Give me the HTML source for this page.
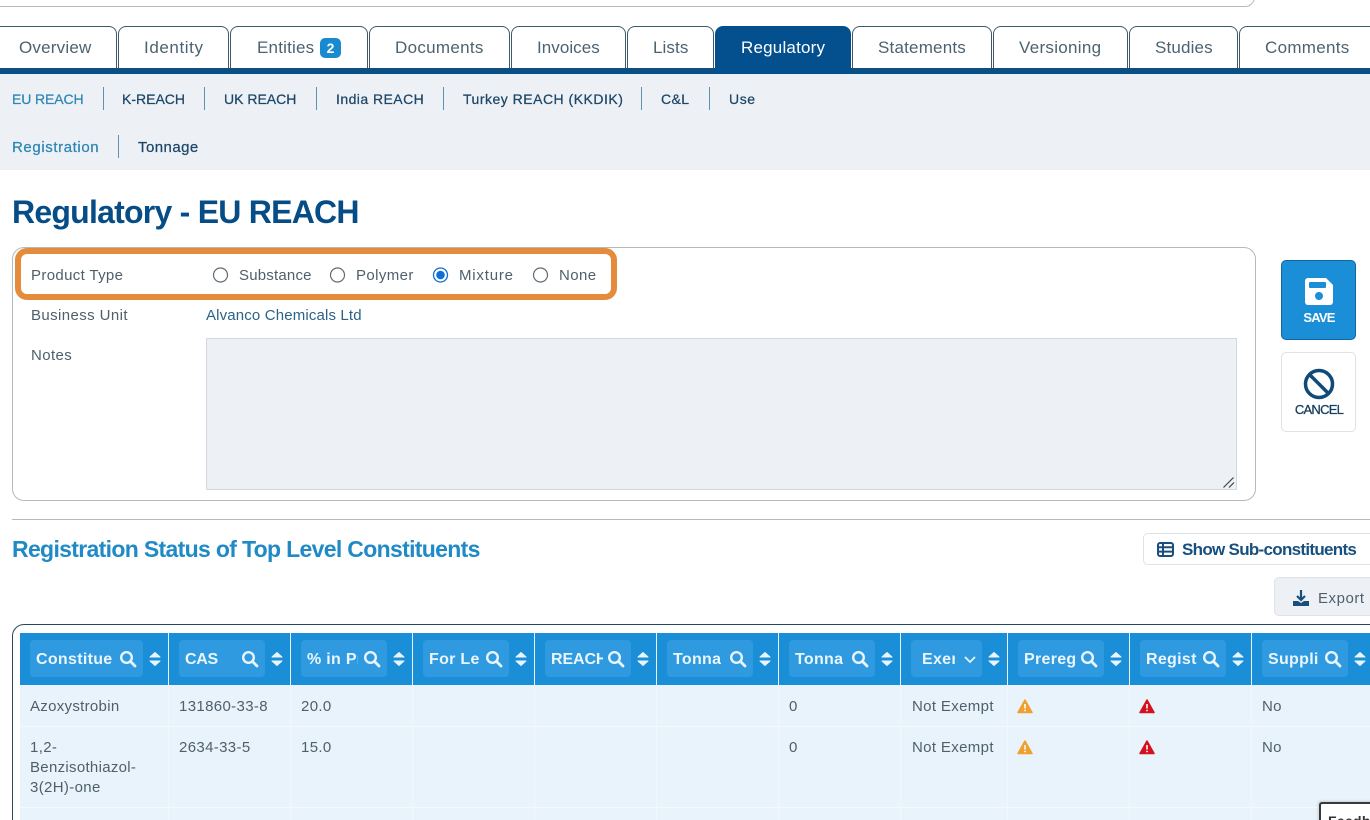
<!DOCTYPE html>
<html style="width:1370px;height:820px;overflow:hidden"><head><meta charset="utf-8"><title>Regulatory - EU REACH</title>
<style>
html,body{margin:0;padding:0}
body{width:1370px;height:820px;overflow:hidden;background:#fff;font-family:"Liberation Sans",sans-serif;color:#4a5a66;font-size:15px}
#p{position:relative;width:1370px;height:820px;overflow:hidden;background:#fff}
.a{position:absolute;box-sizing:border-box}
.t{position:absolute;white-space:nowrap;line-height:20px}
.tab{position:absolute;top:26px;height:43px;box-sizing:border-box;border:1px solid #3c5a6b;border-bottom:0;border-radius:8px 8px 0 0;background:#fff}
.tl{font-size:17px;letter-spacing:.3px;color:#4d6270;top:38px}
.s{font-size:14px;color:#1d4768;-webkit-text-stroke:.25px currentColor;top:89px;letter-spacing:.4px}
.sep{position:absolute;width:1px;background:#5f93ad}
.b{letter-spacing:.4px;color:#4f5f6b}
.hc{position:absolute;top:633px;height:52px;width:1px;background:#e8f5fb}
.ib{position:absolute;top:640px;height:37px;background:#2f9ae0;border-radius:4px}
.ht{position:absolute;top:650px;line-height:20px;height:20px;overflow:hidden;white-space:nowrap;font-size:16px;font-weight:bold;color:#eaf6fd;letter-spacing:.3px}
.i{position:absolute}
.c{position:absolute;font-size:15px;line-height:20px;color:#4f5f6b;letter-spacing:.35px;white-space:nowrap}
.v{position:absolute;width:1px;top:685px;height:135px;background:#f1f7fb}
</style></head><body><div id="p">

<div class="a" style="left:-20px;top:-30px;width:1275px;height:37px;border:1px solid #b3b9bc;border-radius:10px"></div>

<!-- tabs -->
<div class="tab" style="left:-10px;width:127px"></div>
<div class="tab" style="left:118px;width:111px"></div>
<div class="tab" style="left:230px;width:138px"></div>
<div class="tab" style="left:369px;width:141px"></div>
<div class="tab" style="left:511px;width:115px"></div>
<div class="tab" style="left:627px;width:87px"></div>
<div class="tab" style="left:715px;width:136px;background:#04508f;border-color:#04508f"></div>
<div class="tab" style="left:852px;width:140px"></div>
<div class="tab" style="left:993px;width:135px"></div>
<div class="tab" style="left:1129px;width:109px"></div>
<div class="tab" style="left:1239px;width:150px"></div>
<div class="a" style="left:0;top:68px;width:1370px;height:6px;background:#0b4f85"></div>
<div class="a" style="left:715px;top:68px;width:136px;height:6px;background:#04508f"></div>
<div class="a" style="left:0;top:74px;width:1370px;height:96px;background:#edf1f6;border-top:1px solid #dff3fb"></div>

<span class="t tl" style="left:19px;letter-spacing:.2px">Overview</span>
<span class="t tl" style="left:144px;letter-spacing:.6px">Identity</span>
<span class="t tl" style="left:257px;letter-spacing:.2px">Entities</span>
<div class="a" style="left:320px;top:38px;width:21px;height:20px;background:#1a8ad0;border-radius:5px;color:#fff;font-size:14px;font-weight:bold;line-height:20px;text-align:center">2</div>
<span class="t tl" style="left:395px">Documents</span>
<span class="t tl" style="left:537px;letter-spacing:.05px">Invoices</span>
<span class="t tl" style="left:653px;letter-spacing:.1px">Lists</span>
<span class="t tl" style="left:741px;color:#fff;letter-spacing:.2px">Regulatory</span>
<span class="t tl" style="left:878px;letter-spacing:.2px">Statements</span>
<span class="t tl" style="left:1019px">Versioning</span>
<span class="t tl" style="left:1155px;letter-spacing:.15px">Studies</span>
<span class="t tl" style="left:1265px">Comments</span>

<!-- sub nav -->
<span class="t s" style="left:12px;color:#2d87b4;letter-spacing:-.1px">EU REACH</span>
<span class="t s" style="left:122px;letter-spacing:0">K-REACH</span>
<span class="t s" style="left:224px;letter-spacing:0">UK REACH</span>
<span class="t s" style="left:336px;letter-spacing:.45px">India REACH</span>
<span class="t s" style="left:463px;letter-spacing:.5px">Turkey REACH (KKDIK)</span>
<span class="t s" style="left:661px;letter-spacing:.4px">C&amp;L</span>
<span class="t s" style="left:729px;letter-spacing:.6px">Use</span>
<span class="t s" style="left:12px;top:138px;color:#2d87b4;letter-spacing:.6px;font-size:15px">Registration</span>
<span class="t s" style="left:138px;top:138px;letter-spacing:.45px;font-size:15px">Tonnage</span>
<div class="sep" style="left:103px;top:87px;height:23px"></div>
<div class="sep" style="left:204px;top:87px;height:23px"></div>
<div class="sep" style="left:316px;top:87px;height:23px"></div>
<div class="sep" style="left:443px;top:87px;height:23px"></div>
<div class="sep" style="left:641px;top:87px;height:23px"></div>
<div class="sep" style="left:709px;top:87px;height:23px"></div>
<div class="sep" style="left:118px;top:135px;height:23px"></div>

<span class="t" style="left:12px;top:192px;line-height:40px;font-size:32px;font-weight:bold;color:#064c86;letter-spacing:-.76px">Regulatory - EU REACH</span>

<!-- form -->
<div class="a" style="left:12px;top:247px;width:1244px;height:254px;border:1px solid #b0bbc0;border-radius:12px"></div>
<div class="a" style="left:15px;top:248px;width:602px;height:52px;border:6px solid #e58b3c;border-radius:12px;background:#fff"></div>
<span class="t b" style="left:31px;top:266px;letter-spacing:.35px">Product Type</span>
<span class="t b" style="left:31px;top:306px">Business Unit</span>
<span class="t b" style="left:31px;top:346px">Notes</span>
<span class="t b" style="left:206px;top:306px;color:#2b6387;letter-spacing:.15px">Alvanco Chemicals Ltd</span>
<svg class="i" style="left:210px;top:265px" width="340" height="20" viewBox="210 265 340 20">
<g fill="#fff" stroke="#626c73" stroke-width="1.2"><circle cx="220.500" cy="275" r="7"/><circle cx="337.500" cy="275" r="7"/><circle cx="540.500" cy="275" r="7"/></g>
<circle cx="440.500" cy="275" r="7" fill="#fff" stroke="#0f6fd6" stroke-width="1.3"/><circle cx="440.500" cy="275" r="4.300" fill="#0f6fd6"/>
</svg>
<span class="t b" style="left:239px;top:266px;letter-spacing:.2px">Substance</span>
<span class="t b" style="left:356px;top:266px">Polymer</span>
<span class="t b" style="left:459px;top:266px;letter-spacing:.8px">Mixture</span>
<span class="t b" style="left:559px;top:266px">None</span>
<div class="a" style="left:206px;top:338px;width:1031px;height:152px;background:#edf1f6;border:1px solid #d2d8dd"></div>
<svg class="i" style="left:1222px;top:476px" width="14" height="13"><path d="M1.500 11.500L11.500 1.500M7 11.500L12 6.500" stroke="#3d4347" stroke-width="1.200" fill="none"/></svg>

<!-- buttons -->
<div class="a" style="left:1281px;top:260px;width:75px;height:80px;background:#1a8fd8;border:1px solid #12679f;border-radius:5px"></div>
<svg class="i" style="left:1305px;top:278px" width="28" height="27" viewBox="0 0 28 27"><path d="M3 0H21L28 7V24A3 3 0 0 1 25 27H3A3 3 0 0 1 0 24V3A3 3 0 0 1 3 0Z" fill="#fff"/><rect x="4" y="4" width="17" height="6" rx="1" fill="#1a8fd8"/><circle cx="14" cy="18" r="4" fill="#1a8fd8"/></svg>
<span class="t" style="left:1281px;width:76px;text-align:center;top:308px;font-size:13px;font-weight:bold;color:#fff;letter-spacing:-.8px">SAVE</span>
<div class="a" style="left:1281px;top:352px;width:75px;height:80px;background:#fff;border:1px solid #dfe3e6;border-radius:5px"></div>
<svg class="i" style="left:1303px;top:368px" width="32" height="32" viewBox="0 0 32 32"><circle cx="16" cy="16" r="13.500" fill="none" stroke="#0f4a78" stroke-width="3.500"/><path d="M6.500 6.500L25.500 25.500" stroke="#0f4a78" stroke-width="3.500"/></svg>
<span class="t" style="left:1281px;width:76px;text-align:center;top:400px;font-size:13px;color:#153f60;letter-spacing:-.75px;-webkit-text-stroke:.3px #153f60">CANCEL</span>

<!-- section -->
<div class="a" style="left:12px;top:519px;width:1358px;height:1px;background:#b2bcc4"></div>
<span class="t" style="left:12px;top:535px;line-height:28px;font-size:23px;font-weight:bold;color:#1f8ac6;letter-spacing:-.67px">Registration Status of Top Level Constituents</span>
<div class="a" style="left:1143px;top:533px;width:260px;height:32px;border:1px solid #dfe3e6;border-radius:5px;background:#fff"></div>
<svg class="i" style="left:1157px;top:542px" width="17" height="15" viewBox="0 0 17 15"><rect x="1" y="1" width="15" height="13" rx="2" fill="none" stroke="#17507f" stroke-width="2"/><path d="M1 5.300H16M1 9.600H16M6 1V14" stroke="#17507f" stroke-width="2"/></svg>
<span class="t" style="left:1182px;top:540px;font-size:17px;font-weight:bold;color:#17507f;letter-spacing:-.7px">Show Sub-constituents</span>
<div class="a" style="left:1274px;top:577px;width:130px;height:39px;background:#edf1f6;border:1px solid #dfe3e6;border-radius:5px"></div>
<svg class="i" style="left:1293px;top:590px" width="16" height="16" viewBox="0 0 16 16"><path d="M8 0V9M4 6L8 10L12 6" fill="none" stroke="#17507f" stroke-width="2.200"/><path d="M0 11H5L8 13L11 11H16V16H0Z" fill="#17507f"/></svg>
<span class="t b" style="left:1318px;top:589px;letter-spacing:.55px">Export</span>

<!-- table -->
<div class="a" style="left:12px;top:624px;width:1400px;height:220px;border:1px solid #25485e;border-radius:12px"></div>
<div class="a" style="left:20px;top:633px;width:1350px;height:52px;background:#1a8fd8"></div>
<div class="a" style="left:20px;top:685px;width:1350px;height:135px;background:#e8f3fb"></div>
<div class="a" style="left:20px;top:726px;width:1350px;height:1px;background:#f4f9fd"></div>
<div class="a" style="left:20px;top:807px;width:1350px;height:1px;background:#f4f9fd"></div>

<div class="hc" style="left:168px"></div><div class="hc" style="left:290px"></div><div class="hc" style="left:412px"></div><div class="hc" style="left:534px"></div><div class="hc" style="left:656px"></div><div class="hc" style="left:778px"></div><div class="hc" style="left:900px"></div><div class="hc" style="left:1007px"></div><div class="hc" style="left:1129px"></div><div class="hc" style="left:1251px"></div>
<div class="v" style="left:168px"></div><div class="v" style="left:290px"></div><div class="v" style="left:412px"></div><div class="v" style="left:534px"></div><div class="v" style="left:656px"></div><div class="v" style="left:778px"></div><div class="v" style="left:900px"></div><div class="v" style="left:1007px"></div><div class="v" style="left:1129px"></div><div class="v" style="left:1251px"></div>

<div class="ib" style="left:30px;width:113px"></div><div class="ib" style="left:179px;width:86px"></div><div class="ib" style="left:301px;width:86px"></div><div class="ib" style="left:423px;width:86px"></div><div class="ib" style="left:545px;width:86px"></div><div class="ib" style="left:667px;width:86px"></div><div class="ib" style="left:789px;width:86px"></div><div class="ib" style="left:911px;width:71px"></div><div class="ib" style="left:1018px;width:86px"></div><div class="ib" style="left:1140px;width:86px"></div><div class="ib" style="left:1262px;width:86px"></div>

<span class="ht" style="left:36px;width:76px">Constituent</span>
<span class="ht" style="left:185px;width:52px;letter-spacing:-.3px">CAS</span>
<span class="ht" style="left:307px;width:51px">% in Product</span>
<span class="ht" style="left:429px;width:51px">For Legal</span>
<span class="ht" style="left:551px;width:52px;letter-spacing:-.1px">REACH</span>
<span class="ht" style="left:673px;width:48px">Tonnage</span>
<span class="ht" style="left:795px;width:48px">Tonnage</span>
<span class="ht" style="left:922px;width:33px">Exempt</span>
<span class="ht" style="left:1024px;width:51px">Prereg</span>
<span class="ht" style="left:1146px;width:51px">Registered</span>
<span class="ht" style="left:1268px;width:51px">Supplier</span>

<svg class="i" style="left:0;top:630px" width="1370" height="60" viewBox="0 630 1370 60">
<defs>
<g id="q"><circle cx="-1.500" cy="-1.500" r="5.300" fill="none" stroke="#e8f5fd" stroke-width="2.400"/><path d="M2.300 2.300L7 7" stroke="#e8f5fd" stroke-width="2.800" stroke-linecap="round"/></g>
<g id="o"><path d="M-5 -2L0 -6.500L5 -2ZM-5 2L0 6.500L5 2Z" fill="#e8f5fd" stroke="#e8f5fd" stroke-linejoin="round"/></g>
</defs>
<use href="#q" x="128" y="659"/><use href="#o" x="155" y="659"/>
<use href="#q" x="250" y="659"/><use href="#o" x="277" y="659"/>
<use href="#q" x="372" y="659"/><use href="#o" x="399" y="659"/>
<use href="#q" x="494" y="659"/><use href="#o" x="521" y="659"/>
<use href="#q" x="616" y="659"/><use href="#o" x="643" y="659"/>
<use href="#q" x="738" y="659"/><use href="#o" x="765" y="659"/>
<use href="#q" x="860" y="659"/><use href="#o" x="887" y="659"/>
<path d="M965 657L970 662L975 657" fill="none" stroke="#e8f5fd" stroke-width="1.800"/><use href="#o" x="994" y="659"/>
<use href="#q" x="1089" y="659"/><use href="#o" x="1116" y="659"/>
<use href="#q" x="1211" y="659"/><use href="#o" x="1238" y="659"/>
<use href="#q" x="1333" y="659"/><use href="#o" x="1360" y="659"/>
</svg>

<!-- rows -->
<span class="c" style="left:30px;top:697px;letter-spacing:.3px">Azoxystrobin</span>
<span class="c" style="left:179px;top:697px">131860-33-8</span>
<span class="c" style="left:301px;top:697px">20.0</span>
<span class="c" style="left:789px;top:697px">0</span>
<span class="c" style="left:912px;top:697px">Not Exempt</span>
<span class="c" style="left:1262px;top:697px">No</span>
<span class="c" style="left:30px;top:738px">1,2-</span>
<span class="c" style="left:30px;top:758px;letter-spacing:.3px">Benzisothiazol-</span>
<span class="c" style="left:30px;top:778px">3(2H)-one</span>
<span class="c" style="left:179px;top:738px">2634-33-5</span>
<span class="c" style="left:301px;top:738px">15.0</span>
<span class="c" style="left:789px;top:738px">0</span>
<span class="c" style="left:912px;top:738px">Not Exempt</span>
<span class="c" style="left:1262px;top:738px">No</span>

<svg class="i" style="left:1010px;top:695px" width="160" height="62" viewBox="1010 695 160 62">
<defs>
<g id="w"><path d="M0 -6.500L7 6H-7Z" stroke-width="1.500" stroke-linejoin="round"/><path d="M0 -2.500V2" stroke="#fff" stroke-width="1.600" fill="none"/><circle cx="0" cy="4" r=".9" fill="#fff" stroke="none"/></g>
</defs>
<use href="#w" x="1025" y="706.500" fill="#f0a030" stroke="#f0a030"/>
<use href="#w" x="1025" y="747.500" fill="#f0a030" stroke="#f0a030"/>
<use href="#w" x="1147" y="706.500" fill="#d5111f" stroke="#d5111f"/>
<use href="#w" x="1147" y="747.500" fill="#d5111f" stroke="#d5111f"/>
</svg>

<!-- feedback -->
<div class="a" style="left:1319px;top:802px;width:80px;height:40px;background:#fff;border:2px solid #3a3a3a;border-right:0;border-radius:3px 0 0 0;box-shadow:-1px -1px 2px rgba(0,0,0,.15)"></div>
<span class="t" style="left:1328px;top:811px;font-size:14px;font-weight:bold;color:#333;letter-spacing:.3px">Feedback</span>
</div></body></html>
